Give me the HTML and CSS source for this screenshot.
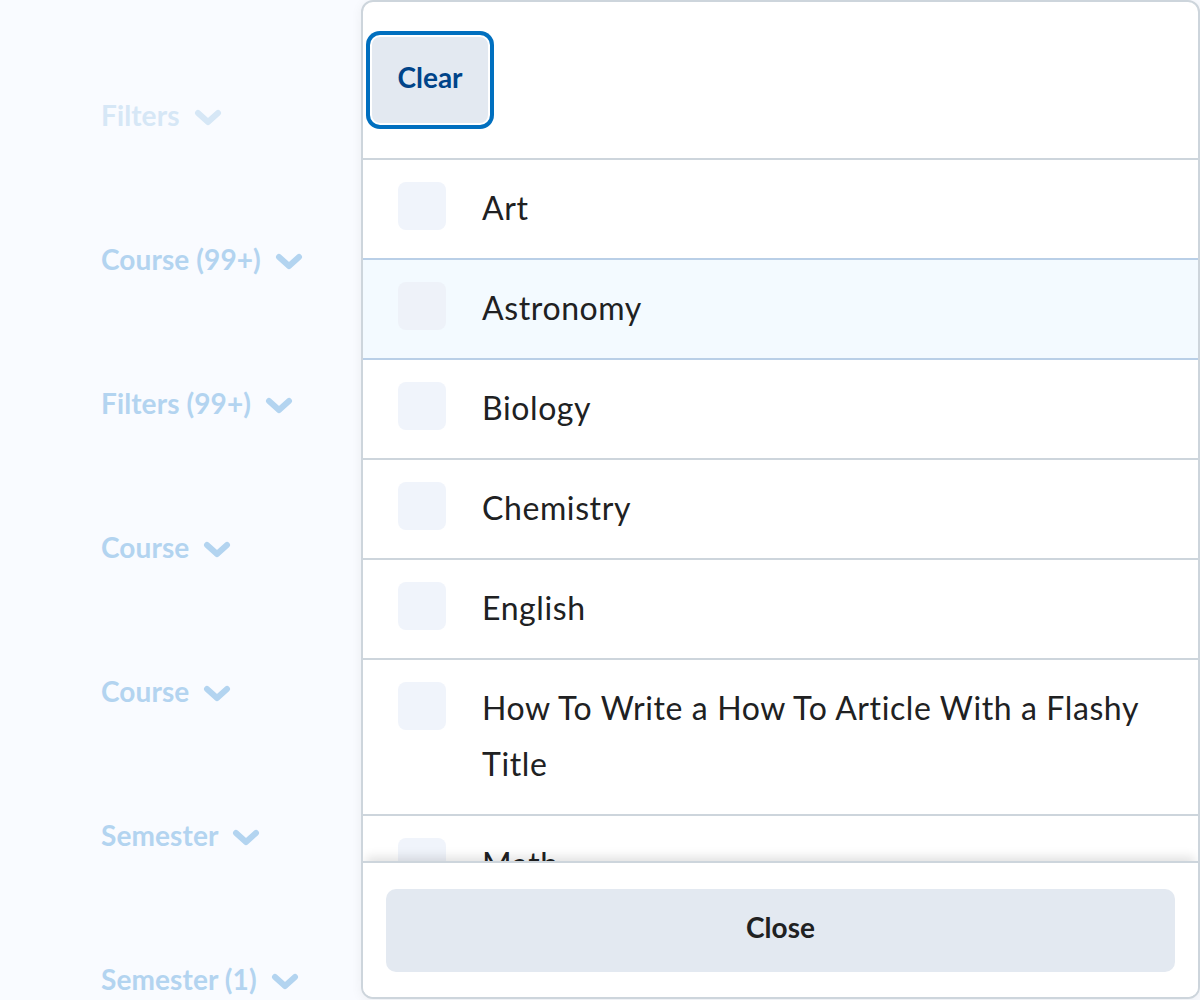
FILE: index.html
```html
<!DOCTYPE html>
<html lang="en">
<head>
<meta charset="utf-8">
<title>Filter dropdown</title>
<link rel="stylesheet" href="styles.css">
</head>
<body>
<div class="page">
  <div class="side">
    <div class="side-item faint">Filters <svg class="chev" viewBox="0 0 28 18"><path d="M4 4 L14 13 L24 4"/></svg></div>
    <div class="side-item">Course (99+) <svg class="chev" viewBox="0 0 28 18"><path d="M4 4 L14 13 L24 4"/></svg></div>
    <div class="side-item">Filters (99+) <svg class="chev" viewBox="0 0 28 18"><path d="M4 4 L14 13 L24 4"/></svg></div>
    <div class="side-item">Course <svg class="chev" viewBox="0 0 28 18"><path d="M4 4 L14 13 L24 4"/></svg></div>
    <div class="side-item">Course <svg class="chev" viewBox="0 0 28 18"><path d="M4 4 L14 13 L24 4"/></svg></div>
    <div class="side-item">Semester <svg class="chev" viewBox="0 0 28 18"><path d="M4 4 L14 13 L24 4"/></svg></div>
    <div class="side-item">Semester (1) <svg class="chev" viewBox="0 0 28 18"><path d="M4 4 L14 13 L24 4"/></svg></div>
  </div>
  <div class="panel">
    <div class="panel-head">
      <button class="btn-clear">Clear</button>
    </div>
    <div class="list">
      <div class="row before-hover"><span class="box"></span><span class="label">Art</span></div>
      <div class="row hover"><span class="box"></span><span class="label">Astronomy</span></div>
      <div class="row"><span class="box"></span><span class="label">Biology</span></div>
      <div class="row"><span class="box"></span><span class="label">Chemistry</span></div>
      <div class="row"><span class="box"></span><span class="label">English</span></div>
      <div class="row"><span class="box"></span><span class="label">How To Write a How To Article With a Flashy Title</span></div>
      <div class="row"><span class="box"></span><span class="label">Math</span></div>
    </div>
    <div class="panel-foot">
      <button class="btn-close">Close</button>
    </div>
  </div>
</div>
</body>
</html>
```

FILE: styles.css
```css
* { box-sizing: border-box; }
html, body { margin: 0; padding: 0; }
body {
  width: 1200px;
  height: 1000px;
  overflow: hidden;
  background: #f9fbff;
  font-family: Lato, "Noto Sans", "Liberation Sans", sans-serif;
  color: #202122;
}
.page {
  display: flex;
  height: 1000px;
}
.side {
  width: 361px;
  flex: none;
  padding: 95px 0 0 101px;
  display: flex;
  flex-direction: column;
  gap: 104px;
}
.side-item {
  display: flex;
  align-items: center;
  height: 40px;
  font-size: 28px;
  font-weight: 700;
  letter-spacing: 0.1px;
  color: #b3d4f0;
  white-space: nowrap;
}
.side-item.faint { color: #d6e7f6; }
.chev {
  width: 28px;
  height: 18px;
  margin-left: 14px;
  margin-top: 6px;
}
.chev path {
  fill: none;
  stroke: currentColor;
  stroke-width: 6;
  stroke-linecap: round;
  stroke-linejoin: round;
}
.panel {
  flex: 1;
  height: 999px;
  background: #fff;
  border: 2px solid #cdd5dc;
  border-radius: 12px;
  display: flex;
  flex-direction: column;
  overflow: hidden;
  box-shadow: 0 2px 12px rgba(0, 0, 0, 0.06);
}
.panel-head {
  height: 158px;
  flex: none;
  border-bottom: 2px solid #cdd5dc;
  padding: 35px 0 0 9px;
}
.btn-clear {
  width: 116px;
  height: 86px;
  border: none;
  border-radius: 8px;
  background: #e3e9f1;
  color: #004489;
  font-family: inherit;
  font-size: 28px;
  font-weight: 700;
  box-shadow: 0 0 0 2px #fff, 0 0 0 6px #006fbf;
  padding: 0 0 6px 0;
}
.list {
  flex: 1;
  overflow: hidden;
}
.row {
  display: flex;
  align-items: flex-start;
  padding: 21px 36px 21px 35px;
  border-bottom: 2px solid #cdd5dc;
}
.row.before-hover { border-bottom-color: #b9cfe7; }
.row.hover {
  background: #f3faff;
  border-bottom-color: #b9cfe7;
}
.box {
  flex: none;
  width: 48px;
  height: 48px;
  border-radius: 8px;
  background: #f0f4fb;
  margin: 1px 36px 0 0;
}
.row.hover .box { background: #eef2f9; }
.label {
  font-size: 32px;
  line-height: 56px;
  letter-spacing: 0.6px;
  margin-top: -1px;
  margin-bottom: 1px;
}
.panel-foot {
  flex: none;
  height: 136px;
  border-top: 2px solid #cdd5dc;
  padding: 26px 23px 0 23px;
  position: relative;
  box-shadow: 0 -7px 10px -3px rgba(0, 0, 0, 0.12);
  background: #fff;
}
.btn-close {
  width: 100%;
  height: 83px;
  border: none;
  border-radius: 10px;
  background: #e3e9f1;
  color: #202122;
  font-family: inherit;
  font-size: 28px;
  font-weight: 700;
  padding: 0 0 8px 0;
}
```
